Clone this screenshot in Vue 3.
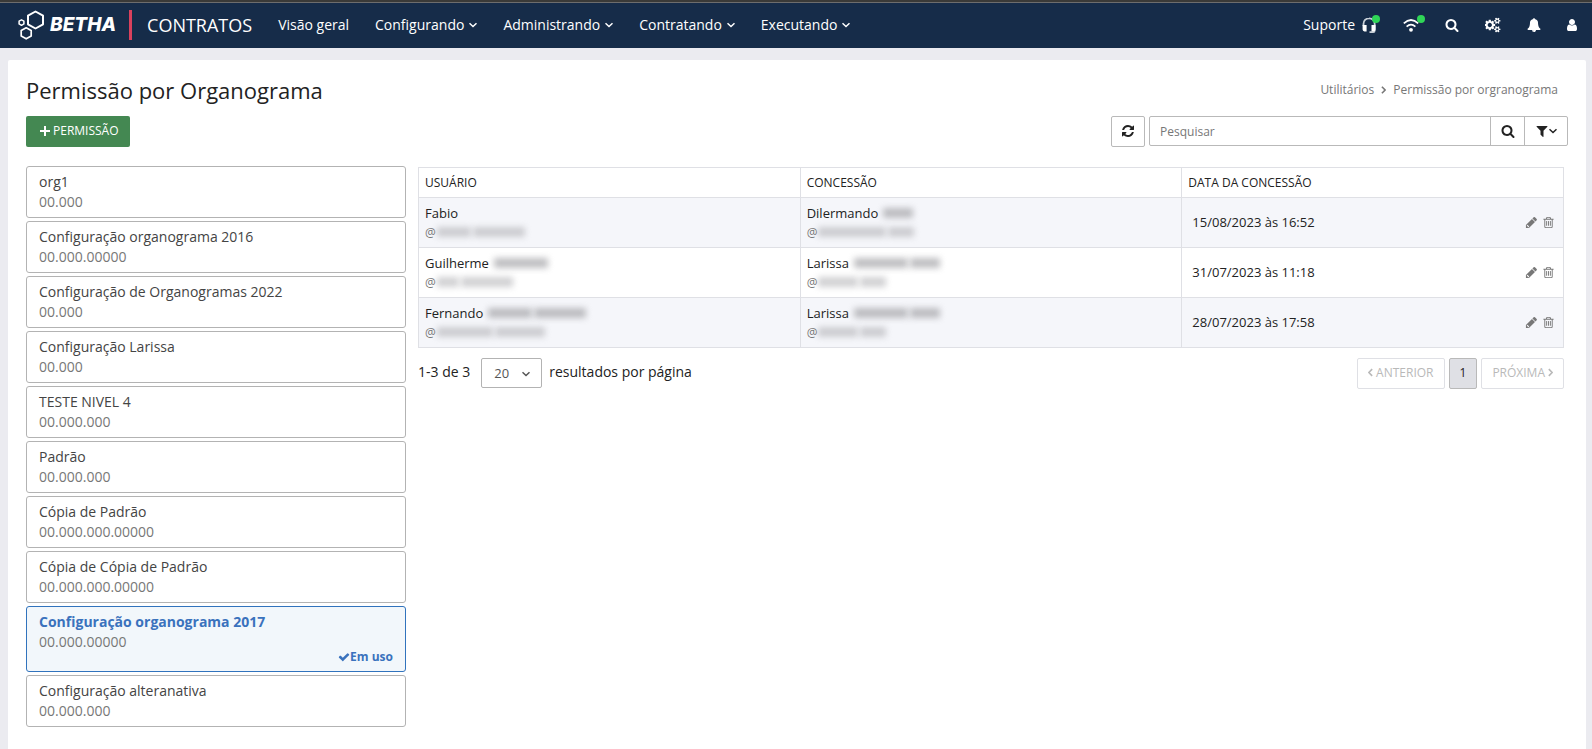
<script setup>
import { ref } from 'vue'

const icons = {
  search: 'M1216 832q0-185-131.5-316.5t-316.5-131.5-316.5 131.5-131.5 316.5 131.5 316.5 316.5 131.5 316.5-131.5 131.5-316.5zm512 832q0 52-38 90t-90 38q-54 0-90-38l-343-342q-179 124-399 124-143 0-273.5-55.5t-225-150-150-225-55.5-273.5 55.5-273.5 150-225 225-150 273.5-55.5 273.5 55.5 225 150 150 225 55.5 273.5q0 220-124 399l343 343q37 37 37 90z',
  cogs: 'M832 896q0-106-75-181t-181-75-181 75-75 181 75 181 181 75 181-75 75-181zm768 512q0-52-38-90t-90-38-90 38-38 90q0 53 37.5 90.5t90.5 37.5 90.5-37.5 37.5-90.5zm0-1024q0-52-38-90t-90-38-90 38-38 90q0 53 37.5 90.5t90.5 37.5 90.5-37.5 37.5-90.5zm-384 421v185q0 10-7 19.5t-16 10.5l-155 24q-11 35-32 76 34 48 90 115 7 11 7 20 0 12-7 19-23 30-82.5 89.5t-78.5 59.5q-11 0-21-7l-115-90q-37 19-77 31-11 108-23 155-7 24-30 24h-186q-11 0-20-7.5t-10-17.5l-23-153q-34-10-75-31l-118 89q-7 7-20 7-11 0-21-8-144-133-144-160 0-9 7-19 10-14 41-53t47-61q-23-44-35-82l-152-24q-10-1-17-9.5t-7-19.5v-185q0-10 7-19.5t16-10.5l155-24q11-35 32-76-34-48-90-115-7-11-7-20 0-12 7-20 22-30 82-89t79-59q11 0 21 7l115 90q34-18 77-32 11-108 23-154 7-24 30-24h186q11 0 20 7.5t10 17.5l23 153q34 10 75 31l118-89q8-7 20-7 11 0 21 8 144 133 144 160 0 8-7 19-12 16-42 54t-45 60q23 48 34 82l152 23q10 2 17 10.5t7 19.5zm640 533v140q0 16-149 31-12 27-30 52 51 113 51 138 0 4-4 7-122 71-124 71-8 0-46-47t-52-68q-20 2-30 2t-30-2q-14 21-52 68t-46 47q-2 0-124-71-4-3-4-7 0-25 51-138-18-25-30-52-149-15-149-31v-140q0-16 149-31 13-29 30-52-51-113-51-138 0-4 4-7 4-2 35-20t59-34 30-16q8 0 46 46.5t52 67.5q20-2 30-2t30 2q51-71 92-112l6-2q4 0 124 70 4 3 4 7 0 25-51 138 17 23 30 52 149 15 149 31zm0-1024v140q0 16-149 31-12 27-30 52 51 113 51 138 0 4-4 7-122 71-124 71-8 0-46-47t-52-68q-20 2-30 2t-30-2q-14 21-52 68t-46 47q-2 0-124-71-4-3-4-7 0-25 51-138-18-25-30-52-149-15-149-31v-140q0-16 149-31 13-29 30-52-51-113-51-138 0-4 4-7 4-2 35-20t59-34 30-16q8 0 46 46.5t52 67.5q20-2 30-2t30 2q51-71 92-112l6-2q4 0 124 70 4 3 4 7 0 25-51 138 17 23 30 52 149 15 149 31z',
  bell: 'M912 1696q0-16-16-16-59 0-101.5-42.5t-42.5-101.5q0-16-16-16t-16 16q0 73 51.5 124.5t124.5 51.5q16 0 16-16zm816-288q0 52-38 90t-90 38h-448q0 106-75 181t-181 75-181-75-75-181h-448q-52 0-90-38t-38-90q50-42 91-88t85-119.5 74.5-158.5 50-206 19.5-260q0-152 117-282.5t307-158.5q-8-19-8-39 0-40 28-68t68-28 68 28 28 68q0 20-8 39 190 28 307 158.5t117 282.5q0 139 19.5 260t50 206 74.5 158.5 85 119.5 91 88z',
  user: 'M1536 1399q0 109-62.5 187t-150.5 78h-854q-88 0-150.5-78t-62.5-187q0-85 8.5-160.5t31.5-152 58.5-131 94-89 134.5-34.5q131 128 313 128t313-128q76 0 134.5 34.5t94 89 58.5 131 31.5 152 8.5 160.5zm-256-887q0 159-112.5 271.5t-271.5 112.5-271.5-112.5-112.5-271.5 112.5-271.5 271.5-112.5 271.5 112.5 112.5 271.5z',
  refresh: 'M1639 1056q0 5-1 7-64 268-268 434.5t-478 166.5q-146 0-282.5-55t-243.5-157l-129 129q-19 19-45 19t-45-19-19-45v-448q0-26 19-45t45-19h448q26 0 45 19t19 45-19 45l-137 137q71 66 161 102t187 36q134 0 250-65t186-179q11-17 53-117 8-23 30-23h192q13 0 22.5 9.5t9.5 22.5zm25-800v448q0 26-19 45t-45 19h-448q-26 0-45-19t-19-45 19-45l138-138q-148-137-349-137-134 0-250 65t-186 179q-11 17-53 117-8 23-30 23h-199q-13 0-22.5-9.5t-9.5-22.5v-7q65-268 270-434.5t480-166.5q146 0 284 55.5t245 156.5l130-129q19-19 45-19t45 19 19 45z',
  filter: 'M1595 295q17 41-14 70l-493 493v742q0 42-39 59-13 5-25 5-27 0-45-19l-256-256q-19-19-19-45v-486l-493-493q-31-29-14-70 17-39 59-39h1280q42 0 59 39z',
  pencil: 'M491 1536l91-91-235-235-91 91v107h128v128h107zM960 416l416 416-832 832h-416v-416zm683 96q0 53-37 90l-166 166-416-416 166-165q36-38 90-38 53 0 91 38l235 234q37 39 37 91z',
  trash: 'M704 736v576q0 14-9 23t-23 9h-64q-14 0-23-9t-9-23v-576q0-14 9-23t23-9h64q14 0 23 9t9 23zm256 0v576q0 14-9 23t-23 9h-64q-14 0-23-9t-9-23v-576q0-14 9-23t23-9h64q14 0 23 9t9 23zm256 0v576q0 14-9 23t-23 9h-64q-14 0-23-9t-9-23v-576q0-14 9-23t23-9h64q14 0 23 9t9 23zm128 724v-948h-896v948q0 22 7 40.5t14.5 27 10.5 8.5h832q3 0 10.5-8.5t14.5-27 7-40.5zm-672-1076h448l-48-117q-7-9-17-11h-317q-10 2-17 11zm928 32v64q0 14-9 23t-23 9h-96v948q0 83-47 143.5t-113 60.5h-832q-66 0-113-58.5t-47-141.5v-952h-96q-14 0-23-9t-9-23v-64q0-14 9-23t23-9h309l70-167q15-37 54-63t79-26h320q40 0 79 26t54 63l70 167h309q14 0 23 9t9 23z',
  check: 'M1671 566q0 40-28 68l-724 724-136 136q-28 28-68 28t-68-28l-136-136-362-362q-28-28-28-68t28-68l136-136q28-28 68-28t68 28l294 295 656-657q28-28 68-28t68 28l136 136q28 28 28 68z',
}

const menus = ['Configurando', 'Administrando', 'Contratando', 'Executando']

const orgs = [
  { name: 'org1', mask: '00.000' },
  { name: 'Configuração organograma 2016', mask: '00.000.00000' },
  { name: 'Configuração de Organogramas 2022', mask: '00.000' },
  { name: 'Configuração Larissa', mask: '00.000' },
  { name: 'TESTE NIVEL 4', mask: '00.000.000' },
  { name: 'Padrão', mask: '00.000.000' },
  { name: 'Cópia de Padrão', mask: '00.000.000.00000' },
  { name: 'Cópia de Cópia de Padrão', mask: '00.000.000.00000' },
  { name: 'Configuração organograma 2017', mask: '00.000.00000', inUse: true },
  { name: 'Configuração alteranativa', mask: '00.000.000' },
]

// Hidden parts of names and logins are lists of word widths in pixels.
const rows = [
  {
    user: { name: 'Fabio', rest: [], login: [34, 52] },
    grantor: { name: 'Dilermando', rest: [30], login: [68, 26] },
    date: '15/08/2023 às 16:52',
  },
  {
    user: { name: 'Guilherme', rest: [54], login: [22, 52] },
    grantor: { name: 'Larissa', rest: [54, 30], login: [40, 26] },
    date: '31/07/2023 às 11:18',
  },
  {
    user: { name: 'Fernando', rest: [44, 52], login: [56, 50] },
    grantor: { name: 'Larissa', rest: [54, 30], login: [40, 26] },
    date: '28/07/2023 às 17:58',
  },
]

const query = ref('')
const pageSize = ref('20')
</script>

<template>
  <div class="page">
    <header class="topbar">
      <a class="brand" href="#" aria-label="Betha Contratos">
        <svg class="brand-mark" viewBox="0 0 27 30" fill="none" stroke="#fff" stroke-width="2" stroke-linejoin="round" aria-hidden="true">
          <path d="M17.500 1.500l7.500 4.200v8.600l-7.500 4.200-7.500-4.200V5.700z" />
          <path d="M8.200 17.800l5 2.700v5.500l-5 2.800-5-2.800v-5.500z" stroke-width="1.700" />
          <path d="M3.500 9.800l2.400 1.300v2.800l-2.400 1.400-2.400-1.400v-2.800z" stroke-width="1.500" />
        </svg>
        <span class="brand-name">BETHA</span>
        <span class="brand-bar"></span>
        <span class="product">CONTRATOS</span>
      </a>
      <nav class="menu">
        <a href="#">Visão geral</a>
        <a v-for="m in menus" :key="m" href="#">
          {{ m }}
          <svg class="caret" viewBox="0 0 8 8" aria-hidden="true"><path d="M0.500 2.200l3.500 3.300 3.500-3.300" /></svg>
        </a>
      </nav>
      <div class="tools">
        <a class="support" href="#">
          <span>Suporte</span>
          <svg class="ic16" viewBox="0 0 16 16" aria-hidden="true">
            <path d="M2.500 9V7A5.500 5.500 0 0 1 8 1.300 5.500 5.500 0 0 1 13.700 7v6.500q0 1.600-1.500 1.600H8.500" fill="none" stroke="#c9d0d8" stroke-width="1.800" />
            <path d="M1.600 8h4v6.400H3.400a1.800 1.800 0 0 1-1.800-1.800zM10.500 8h4v4.600a1.800 1.800 0 0 1-1.800 1.800h-2.200z" fill="#fff" />
          </svg>
          <i class="dot"></i>
        </a>
        <button type="button" class="tool wifi" aria-label="Conexão">
          <svg class="ic16" viewBox="0 0 16 16" aria-hidden="true">
            <path d="M0.800 6.400Q8-0.400 15.200 6.400M3.600 9.600q4.400-3.800 8.800 0" fill="none" stroke="#fff" stroke-width="1.700" />
            <circle cx="8" cy="12.800" r="1.900" fill="#fff" />
          </svg>
          <i class="dot"></i>
        </button>
        <button type="button" class="tool" aria-label="Buscar">
          <svg class="ic14" viewBox="0 0 1792 1792" aria-hidden="true"><path :d="icons.search" /></svg>
        </button>
        <button type="button" class="tool" aria-label="Configurações">
          <svg class="ic16" viewBox="0 0 1920 1792" aria-hidden="true"><path :d="icons.cogs" /></svg>
        </button>
        <button type="button" class="tool" aria-label="Notificações">
          <svg class="ic14" viewBox="0 0 1792 1792" aria-hidden="true"><path :d="icons.bell" /></svg>
        </button>
        <button type="button" class="tool" aria-label="Perfil">
          <svg class="ic-user" viewBox="256 0 1280 1792" aria-hidden="true"><path :d="icons.user" /></svg>
        </button>
      </div>
    </header>

    <main class="card">
      <div class="heading">
        <h1>Permissão por Organograma</h1>
        <nav class="crumbs" aria-label="Trilha">
          <a href="#">Utilitários</a>
          <svg viewBox="0 0 6 10" aria-hidden="true"><path d="M1 1l4 4-4 4" /></svg>
          <span>Permissão por orgranograma</span>
        </nav>
      </div>

      <div class="actions">
        <button type="button" class="primary">
          <svg viewBox="0 0 10 10" aria-hidden="true"><path d="M4 0h2v4h4v2H6v4H4V6H0V4h4z" /></svg>
          PERMISSÃO
        </button>
        <div class="filters">
          <button type="button" class="reload" aria-label="Atualizar">
            <svg class="ic14" viewBox="0 0 1792 1792" aria-hidden="true"><path :d="icons.refresh" /></svg>
          </button>
          <form class="search" @submit.prevent>
            <input v-model="query" type="text" placeholder="Pesquisar" aria-label="Pesquisar" />
            <button type="submit" aria-label="Pesquisar">
              <svg class="ic14" viewBox="0 0 1792 1792" aria-hidden="true"><path :d="icons.search" /></svg>
            </button>
            <button type="button" class="funnel" aria-label="Filtros">
              <svg class="ic14" viewBox="0 0 1792 1792" aria-hidden="true"><path :d="icons.filter" /></svg>
              <svg class="caret" viewBox="0 0 8 8" aria-hidden="true"><path d="M0.500 2.200l3.500 3.300 3.500-3.300" /></svg>
            </button>
          </form>
        </div>
      </div>

      <div class="content">
        <ul class="orgs">
          <li v-for="o in orgs" :key="o.name">
            <button type="button" class="org" :class="{ active: o.inUse }">
              <span class="org-name">{{ o.name }}</span>
              <span class="org-mask">{{ o.mask }}</span>
              <span v-if="o.inUse" class="in-use">
                <svg viewBox="0 0 1792 1792" aria-hidden="true"><path :d="icons.check" /></svg>Em uso
              </span>
            </button>
          </li>
        </ul>

        <section class="results">
          <table>
            <thead>
              <tr>
                <th scope="col">USUÁRIO</th>
                <th scope="col">CONCESSÃO</th>
                <th scope="col">DATA DA CONCESSÃO</th>
              </tr>
            </thead>
            <tbody>
              <tr v-for="r in rows" :key="r.date">
                <td v-for="(p, k) in [r.user, r.grantor]" :key="k">
                  <div class="line">
                    {{ p.name }}
                    <span v-if="p.rest.length" class="veil dark"><i v-for="(w, n) in p.rest" :key="n" :style="{ width: w + 'px' }"></i></span>
                  </div>
                  <div class="line login">
                    @<span class="veil"><i v-for="(w, n) in p.login" :key="n" :style="{ width: w + 'px' }"></i></span>
                  </div>
                </td>
                <td>
                  <div class="when">
                    <span>{{ r.date }}</span>
                    <span class="row-tools">
                      <button type="button" aria-label="Editar">
                        <svg viewBox="0 0 1792 1792" aria-hidden="true"><path :d="icons.pencil" /></svg>
                      </button>
                      <button type="button" aria-label="Excluir">
                        <svg viewBox="0 0 1792 1792" aria-hidden="true"><path :d="icons.trash" /></svg>
                      </button>
                    </span>
                  </div>
                </td>
              </tr>
            </tbody>
          </table>

          <div class="footer">
            <div class="size">
              <span>1-3 de 3</span>
              <span class="select">
                <select id="page-size" v-model="pageSize">
                  <option>20</option>
                  <option>50</option>
                  <option>100</option>
                </select>
                <svg class="caret" viewBox="0 0 8 8" aria-hidden="true"><path d="M0.500 2.200l3.500 3.300 3.500-3.300" /></svg>
              </span>
              <label for="page-size">resultados por página</label>
            </div>
            <nav class="pager" aria-label="Paginação">
              <button type="button" disabled>
                <svg viewBox="0 0 6 10" aria-hidden="true"><path d="M5 1L1 5l4 4" /></svg>ANTERIOR
              </button>
              <button type="button" class="current">1</button>
              <button type="button" disabled>
                PRÓXIMA<svg viewBox="0 0 6 10" aria-hidden="true"><path d="M1 1l4 4-4 4" /></svg>
              </button>
            </nav>
          </div>
        </section>
      </div>
    </main>
  </div>
</template>

<style>
body {
  background: #ebebf0;
}
</style>

<style scoped>
* {
  box-sizing: border-box;
}
.page {
  min-height: 100vh;
  display: flex;
  flex-direction: column;
  font: 14px/20px 'Open Sans', sans-serif;
  color: #222;
}
button,
input,
select {
  font: inherit;
  color: inherit;
  margin: 0;
}
button {
  cursor: pointer;
}
a {
  color: inherit;
  text-decoration: none;
}
svg {
  display: block;
  flex: none;
  fill: currentColor;
}
.ic14 {
  width: 14px;
  height: 14px;
}
.ic16 {
  width: 16px;
  height: 16px;
}
.ic-user {
  width: 10px;
  height: 14px;
}
.caret {
  width: 8px;
  height: 8px;
}
.caret path,
.crumbs path,
.pager path {
  fill: none;
  stroke: currentColor;
  stroke-width: 1.500;
}

.topbar {
  display: flex;
  align-items: center;
  height: 48px;
  padding: 0 15px 0 18px;
  border-top: 2px solid #3a3a38;
  box-shadow: inset 0 1px #6d6d6d;
  background: #162c49;
  color: #fff;
}
.brand {
  display: flex;
  align-items: center;
}
.brand-mark {
  width: 27px;
  height: 30px;
  fill: none;
}
.brand-name {
  margin-left: 5px;
  font: italic 800 19px/24px Inter, sans-serif;
}
.brand-bar {
  width: 3px;
  height: 30px;
  margin: 0 15px 0 13px;
  background: #d9415d;
}
.product {
  font-size: 18px;
  line-height: 24px;
}
.menu {
  display: flex;
  gap: 26px;
  margin-left: 26px;
}
.menu a {
  display: flex;
  align-items: center;
  gap: 5px;
}
.tools {
  display: flex;
  align-items: center;
  gap: 26px;
  margin-left: auto;
}
.tool {
  padding: 0;
  border: 0;
  background: none;
}
.support {
  display: flex;
  align-items: center;
  gap: 6px;
}
.support,
.wifi {
  position: relative;
}
.dot {
  position: absolute;
  top: 0;
  right: -3px;
  width: 8px;
  height: 8px;
  border-radius: 50%;
  background: #2fd657;
}
.wifi .dot {
  top: -2px;
  right: -6px;
}

.card {
  flex: 1;
  margin: 12px 6px 0 8px;
  padding: 18px 18px 21px;
  border-radius: 2px 2px 0 0;
  background: #fff;
}
.heading {
  display: flex;
  justify-content: space-between;
}
h1 {
  margin: 0;
  font-size: 22px;
  font-weight: 400;
  line-height: 24px;
}
.crumbs {
  display: flex;
  align-items: center;
  gap: 7px;
  padding-right: 10px;
  font-size: 12px;
  line-height: 24px;
  color: #777;
}
.crumbs svg {
  width: 5px;
  height: 8px;
}
.crumbs path {
  stroke-width: 2;
}

.actions {
  display: flex;
  justify-content: space-between;
  align-items: flex-start;
  margin-top: 14px;
}
.primary {
  display: flex;
  align-items: center;
  gap: 3px;
  height: 31px;
  padding: 0 11px 2px 14px;
  border: 0;
  border-radius: 2px;
  background: #448852;
  color: #fff;
  font-size: 12px;
}
.primary svg {
  width: 10px;
  height: 10px;
}
.filters {
  display: flex;
  align-items: flex-start;
  gap: 4px;
  width: 457px;
}
.reload {
  display: flex;
  align-items: center;
  justify-content: center;
  width: 34px;
  height: 31px;
  padding: 0 0 1px;
  border: 1px solid #b9b9b9;
  border-radius: 2px;
  background: #fff;
}
.search {
  display: flex;
  flex: 1;
  height: 30px;
  border: 1px solid #b9b9b9;
  border-radius: 2px;
}
.search input {
  flex: 1;
  min-width: 0;
  padding: 2px 10px 0;
  border: 0;
  outline: 0;
  background: none;
  font-size: 12px;
}
.search input::placeholder {
  color: #777;
  opacity: 1;
}
.search button {
  display: flex;
  align-items: center;
  justify-content: center;
  width: 34px;
  padding: 0;
  border: 0;
  border-left: 1px solid #b9b9b9;
  background: none;
}
.search .funnel {
  width: 43px;
}

.content {
  display: grid;
  grid-template-columns: 380px 1fr;
  gap: 12px;
  margin-top: 19px;
  padding-right: 4px;
}
.orgs {
  display: flex;
  flex-direction: column;
  gap: 3px;
  margin: 0;
  padding: 0;
  list-style: none;
}
.org {
  display: flex;
  flex-direction: column;
  width: 100%;
  padding: 5px 12px;
  border: 1px solid #b3b3b3;
  border-radius: 3px;
  background: #fff;
  text-align: left;
  color: #444;
}
.org-mask {
  color: #777;
}
.org.active {
  border-color: #3173bd;
  background: #f2f7fb;
}
.active .org-name {
  font-weight: 700;
  color: #3a72bd;
}
.in-use {
  display: flex;
  align-items: center;
  align-self: flex-end;
  height: 14px;
  margin: -2px 0 2px;
  font-size: 12px;
  font-weight: 700;
  color: #3a72bd;
}
.in-use svg {
  width: 12px;
  height: 12px;
}

.results {
  padding-top: 1px;
}
table {
  width: 100%;
  border-collapse: collapse;
  table-layout: fixed;
}
th,
td {
  padding: 0 6px;
  border: 1px solid #dfe0e5;
  text-align: left;
}
th {
  height: 30px;
  font-size: 12px;
  font-weight: 400;
}
td {
  height: 50px;
  font-size: 13px;
}
tbody tr:nth-child(odd) {
  background: #f5f6fa;
}
.line {
  display: flex;
  align-items: center;
  gap: 5px;
  line-height: 19px;
}
.login {
  gap: 1px;
  font-size: 12px;
  color: #777;
}
.veil {
  display: flex;
  gap: 2px;
  opacity: 0.500;
}
.veil i {
  height: 10px;
  background: #a4a4a8;
  filter: blur(3px);
}
.veil.dark {
  opacity: 0.700;
}
.when {
  display: flex;
  align-items: center;
  justify-content: space-between;
  padding: 0 2px 2px 4px;
}
.row-tools {
  display: flex;
  gap: 4px;
  padding-top: 2px;
  color: #777;
}
.row-tools button {
  padding: 0;
  border: 0;
  background: none;
}
.row-tools svg {
  width: 13px;
  height: 13px;
}

.footer {
  display: flex;
  align-items: flex-start;
  justify-content: space-between;
  margin-top: 10px;
}
.size {
  display: flex;
  align-items: flex-start;
  line-height: 28px;
}
.select {
  position: relative;
  margin: 0 7px 0 11px;
  color: #555;
}
.select select {
  display: block;
  width: 61px;
  height: 30px;
  padding: 0 12px;
  border: 1px solid #b3b3b3;
  border-radius: 2px;
  background: #fff;
  appearance: none;
  font-size: 13px;
}
.select .caret {
  position: absolute;
  top: 12px;
  right: 12px;
  pointer-events: none;
}
.pager {
  display: flex;
  gap: 4px;
}
.pager button {
  display: flex;
  align-items: center;
  gap: 3px;
  height: 31px;
  padding: 0 10px 2px;
  border: 1px solid #dfe0e5;
  border-radius: 2px;
  background: #fff;
  color: #b9b9b9;
  font-size: 12px;
}
.pager .current {
  border-color: #b9b9b9;
  background: #dfe0e5;
  color: #222;
}
.pager svg {
  width: 5px;
  height: 9px;
}
.pager path {
  stroke-width: 2;
}
</style>
